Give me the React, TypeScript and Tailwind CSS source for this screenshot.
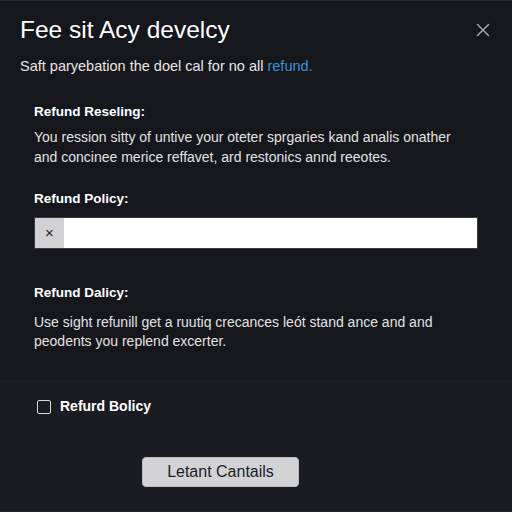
import React, { useState } from 'react';

export default function App() {
  const [checked, setChecked] = useState(false);

  return (
    <div className="w-[512px] h-[512px] bg-[#16171c] flex flex-col overflow-hidden font-['Liberation_Sans',Arial,sans-serif] border-t border-[#2a2b31]">
      {/* Header */}
      <div className="flex items-start justify-between pl-[20px] pr-[22px] pt-[14px]">
        <div>
          <h1 className="text-[24.5px] leading-[30px] text-white">Fee sit Acy develcy</h1>
          <p className="mt-[12px] text-[14.5px] leading-[18px] text-[#e6e6e8]">
            Saft paryebation the doel cal for no all <span className="text-[#3d8fd6]">refund.</span>
          </p>
        </div>
        <button className="mt-[8px] text-[#a0a1a6]" aria-label="Close">
          <svg width="14" height="14" viewBox="0 0 14 14" fill="none" stroke="currentColor" strokeWidth="1.6" strokeLinecap="round">
            <path d="M1.5 1.5l11 11M12.5 1.5l-11 11" />
          </svg>
        </button>
      </div>

      {/* Body */}
      <div className="px-[34px] pt-[28px] flex-1">
        <h2 className="text-[13.5px] leading-[18px] font-bold text-white">Refund Reseling:</h2>
        <p className="mt-[6px] max-w-[434px] text-[14px] leading-[20px] text-[#e2e2e4]">
          You ression sitty of untive your oteter sprgaries kand analis onather and concinee merice reffavet, ard restonics annd reeotes.
        </p>

        <h2 className="mt-[23px] text-[13.5px] leading-[18px] font-bold text-white">Refund Policy:</h2>
        <div className="mt-[9px] flex h-[32px] w-[444px] bg-white border border-[#3a3b40]">
          <span className="w-[29px] bg-[#d2d2d4] flex items-center justify-center text-[15px] text-[#222]">×</span>
          <input className="flex-1 outline-none px-2 text-[13px] text-black" />
        </div>

        <h2 className="mt-[35px] text-[13.5px] leading-[18px] font-bold text-white">Refund Dalicy:</h2>
        <p className="mt-[11px] text-[14px] leading-[19px] text-[#e2e2e4]">
          Use sight refunill get a ruutiq crecances leót stand ance and and peodents you replend excerter.
        </p>
      </div>

      {/* Footer */}
      <div className="h-[132px] bg-[#1b1c21] flex flex-col border-b border-[#24252a]">
        <label className="mt-[16px] ml-[37px] flex items-center gap-[9px] cursor-pointer">
          <input
            type="checkbox"
            checked={checked}
            onChange={() => setChecked(!checked)}
            className="appearance-none w-[14px] h-[14px] border-[1.5px] border-[#d8d8da] rounded-[2px] bg-transparent"
          />
          <span className="text-[14px] font-bold text-white">Refurd Bolicy</span>
        </label>
        <button className="mt-[40px] ml-[142px] w-[157px] h-[30px] rounded-[4px] bg-[#d3d3d5] text-[#1d1d1f] text-[16px] border border-[#bdbdbf]">
          Letant Cantails
        </button>
      </div>
    </div>
  );
}
